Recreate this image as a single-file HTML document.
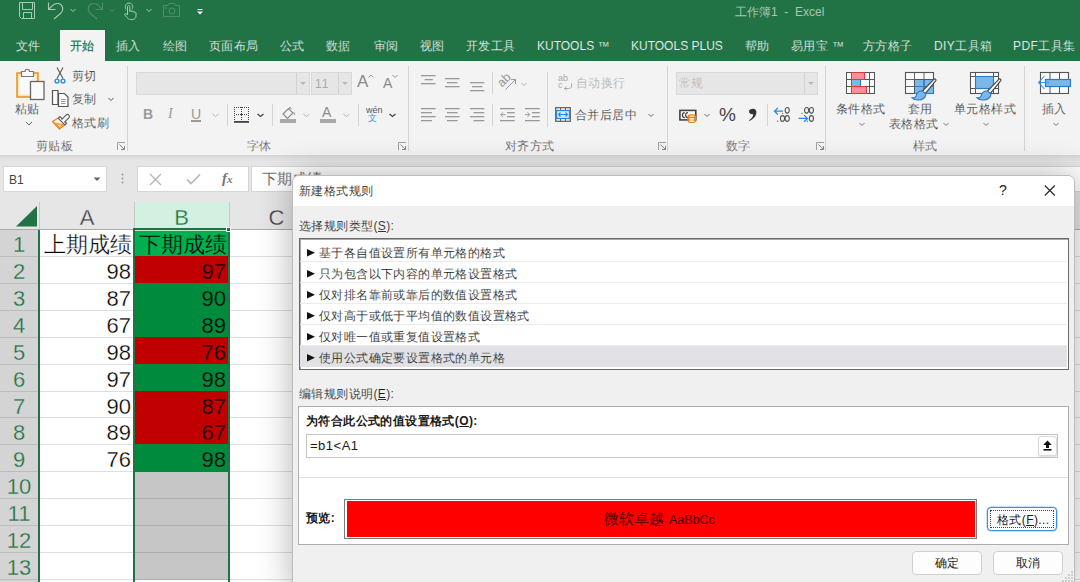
<!DOCTYPE html><html><head><meta charset="utf-8"><style>
*{margin:0;padding:0;box-sizing:border-box}
html,body{width:1080px;height:582px;overflow:hidden;background:#e6e6e6;font-family:"Liberation Sans",sans-serif;position:relative}
.a{position:absolute;white-space:nowrap}
.tab{-webkit-text-stroke:.2px #217346;letter-spacing:.4px;position:absolute;top:38px;font-size:12px;color:#fff;line-height:16px;white-space:nowrap}
.t12{-webkit-text-stroke:.2px #f3f3f3;letter-spacing:.4px;position:absolute;white-space:nowrap;font-size:12px;line-height:16px;color:#262626}
.gl{-webkit-text-stroke:.2px #f3f3f3;letter-spacing:.4px;position:absolute;white-space:nowrap;font-size:12px;line-height:16px;color:#444}
.sep{position:absolute;width:1px;background:#d4d4d4}
.dis{color:#a6a6a6}
.box{position:absolute;background:#fff;border:1px solid #d4d4d4}
svg{position:absolute;overflow:visible}
.ch{position:absolute;top:202px;height:27px;font-size:22px;line-height:31px;text-align:center;color:#444}
.rn{position:absolute;left:0;width:38px;font-size:22px;line-height:27px;text-align:center;color:#217346}
.cell{position:absolute;font-weight:300;font-size:22px;line-height:27px;color:#000;text-align:right;white-space:nowrap}
.dt{-webkit-text-stroke:.12px #f6f6f6;letter-spacing:.4px;position:absolute;white-space:nowrap;font-size:12px;line-height:16px;color:#1a1a1a}
.item{position:absolute;left:300px;width:767px;height:21px;font-size:12px;line-height:16px;color:#1a1a1a;padding-left:8px;padding-top:4px;white-space:nowrap}
.btn{position:absolute;background:#fdfdfd;border:1px solid #d0d0d0;border-radius:4px;font-size:12px;line-height:22px;text-align:center;color:#1a1a1a}
</style></head><body>
<div class="a" style="left:0;top:0;width:1080px;height:61px;background:#217346"></div>
<div class="a" style="left:735px;top:4px;font-size:12px;line-height:16px;color:#a9c6b2">工作簿1&nbsp; - &nbsp;Excel</div>
<div class="a" style="left:60px;top:30px;width:45px;height:31px;background:#f3f3f3"></div>
<div class="tab" style="left:16px;color:#fff">文件</div>
<div class="tab" style="left:70px;color:#217346">开始</div>
<div class="tab" style="left:116px;color:#fff">插入</div>
<div class="tab" style="left:163px;color:#fff">绘图</div>
<div class="tab" style="left:209px;color:#fff">页面布局</div>
<div class="tab" style="left:280px;color:#fff">公式</div>
<div class="tab" style="left:326px;color:#fff">数据</div>
<div class="tab" style="left:374px;color:#fff">审阅</div>
<div class="tab" style="left:420px;color:#fff">视图</div>
<div class="tab" style="left:466px;color:#fff">开发工具</div>
<div class="tab" style="left:537px;color:#fff;letter-spacing:0">KUTOOLS ™</div>
<div class="tab" style="left:631px;color:#fff;letter-spacing:0">KUTOOLS PLUS</div>
<div class="tab" style="left:745px;color:#fff">帮助</div>
<div class="tab" style="left:791px;color:#fff">易用宝 ™</div>
<div class="tab" style="left:863px;color:#fff">方方格子</div>
<div class="tab" style="left:934px;color:#fff">DIY工具箱</div>
<div class="tab" style="left:1013px;color:#fff">PDF工具集</div>
<div class="a" style="left:0;top:61px;width:1080px;height:94px;background:#f3f3f3"></div>
<div class="a" style="left:0;top:155px;width:1080px;height:1px;background:#d5d5d5"></div>
<div class="a" style="left:0;top:156px;width:1080px;height:5px;background:linear-gradient(#d9d9d9,#e6e6e6)"></div>
<div class="t12" style="left:15px;top:101px">粘贴</div>
<div class="t12" style="left:72px;top:68px">剪切</div>
<div class="t12" style="left:72px;top:91px">复制</div>
<div class="t12" style="left:72px;top:115px">格式刷</div>
<div class="gl" style="left:36px;top:138px">剪贴板</div>
<div class="sep" style="left:127px;top:66px;height:85px"></div>
<div class="box" style="left:136px;top:72px;width:174px;height:23px;background:#e6e6e6;border-color:#d9d9d9"></div>
<div class="box" style="left:311px;top:72px;width:41px;height:23px;background:#e6e6e6;border-color:#d9d9d9"></div>
<div class="gl" style="left:247px;top:138px">字体</div>
<div class="sep" style="left:408px;top:66px;height:85px"></div>
<div class="t12 dis" style="left:576px;top:75px">自动换行</div>
<div class="t12" style="left:575px;top:107px">合并后居中</div>
<div class="gl" style="left:505px;top:138px">对齐方式</div>
<div class="sep" style="left:667px;top:66px;height:85px"></div>
<div class="box" style="left:676px;top:72px;width:142px;height:23px;background:#e6e6e6;border-color:#d9d9d9"></div>
<div class="t12 dis" style="left:679px;top:75px">常规</div>
<div class="gl" style="left:726px;top:138px">数字</div>
<div class="sep" style="left:825px;top:66px;height:85px"></div>
<div class="t12" style="left:836px;top:101px">条件格式</div>
<div class="t12" style="left:908px;top:101px">套用</div>
<div class="t12" style="left:889px;top:116px">表格格式</div>
<div class="t12" style="left:954px;top:101px">单元格样式</div>
<div class="gl" style="left:913px;top:138px">样式</div>
<div class="sep" style="left:1024px;top:66px;height:85px"></div>
<div class="t12" style="left:1042px;top:101px">插入</div>
<div class="box" style="left:3px;top:166px;width:104px;height:26px;border-color:#d6d6d6"></div>
<div class="a" style="left:9px;top:172px;font-size:12px;line-height:16px;color:#444">B1</div>
<div class="box" style="left:137px;top:166px;width:112px;height:26px;border-color:#d6d6d6"></div>
<div class="box" style="left:251px;top:166px;width:840px;height:26px;border-color:#d6d6d6"></div>
<div class="a" style="left:262px;top:170px;font-size:15px;line-height:18px;color:#333;-webkit-text-stroke:0.25px #fff">下期成绩</div>
<div class="a" style="left:0;top:229px;width:1080px;height:353px;background:#fff"></div>
<div class="a" style="left:0;top:229px;width:1080px;height:1px;background:#ababab"></div>
<div class="a" style="left:134px;top:202px;width:95px;height:27px;background:#d3f0e0"></div>
<div class="a" style="left:39px;top:202px;width:1px;height:27px;background:#c8c8c8"></div>
<div class="a" style="left:134px;top:202px;width:1px;height:27px;background:#c8c8c8"></div>
<div class="a" style="left:229px;top:202px;width:1px;height:27px;background:#c8c8c8"></div>
<div class="a" style="left:324px;top:202px;width:1px;height:27px;background:#c8c8c8"></div>
<div class="ch" style="left:40px;width:94px;-webkit-text-stroke:0.3px #e6e6e6">A</div>
<div class="ch" style="left:134px;width:95px;color:#217346;-webkit-text-stroke:0.3px #d3f0e0">B</div>
<div class="ch" style="left:229px;width:95px;-webkit-text-stroke:0.3px #e6e6e6">C</div>
<div class="a" style="left:0;top:230px;width:38px;height:352px;background:#d4d4d4"></div>
<div class="a" style="left:38px;top:230px;width:2px;height:352px;background:#217346"></div>
<div class="a" style="left:229px;top:230px;width:1px;height:352px;background:#dedede"></div>
<div class="a" style="left:324px;top:230px;width:1px;height:352px;background:#dedede"></div>
<div class="a" style="left:0;top:256px;width:38px;height:1px;background:#bcbcbc"></div>
<div class="a" style="left:40px;top:256px;width:1040px;height:1px;background:#dedede"></div>
<div class="rn" style="top:231px;-webkit-text-stroke:0.3px #d4d4d4">1</div>
<div class="a" style="left:0;top:283px;width:38px;height:1px;background:#bcbcbc"></div>
<div class="a" style="left:40px;top:283px;width:1040px;height:1px;background:#dedede"></div>
<div class="rn" style="top:258px;-webkit-text-stroke:0.3px #d4d4d4">2</div>
<div class="a" style="left:0;top:310px;width:38px;height:1px;background:#bcbcbc"></div>
<div class="a" style="left:40px;top:310px;width:1040px;height:1px;background:#dedede"></div>
<div class="rn" style="top:285px;-webkit-text-stroke:0.3px #d4d4d4">3</div>
<div class="a" style="left:0;top:337px;width:38px;height:1px;background:#bcbcbc"></div>
<div class="a" style="left:40px;top:337px;width:1040px;height:1px;background:#dedede"></div>
<div class="rn" style="top:312px;-webkit-text-stroke:0.3px #d4d4d4">4</div>
<div class="a" style="left:0;top:364px;width:38px;height:1px;background:#bcbcbc"></div>
<div class="a" style="left:40px;top:364px;width:1040px;height:1px;background:#dedede"></div>
<div class="rn" style="top:339px;-webkit-text-stroke:0.3px #d4d4d4">5</div>
<div class="a" style="left:0;top:391px;width:38px;height:1px;background:#bcbcbc"></div>
<div class="a" style="left:40px;top:391px;width:1040px;height:1px;background:#dedede"></div>
<div class="rn" style="top:366px;-webkit-text-stroke:0.3px #d4d4d4">6</div>
<div class="a" style="left:0;top:417px;width:38px;height:1px;background:#bcbcbc"></div>
<div class="a" style="left:40px;top:417px;width:1040px;height:1px;background:#dedede"></div>
<div class="rn" style="top:393px;-webkit-text-stroke:0.3px #d4d4d4">7</div>
<div class="a" style="left:0;top:444px;width:38px;height:1px;background:#bcbcbc"></div>
<div class="a" style="left:40px;top:444px;width:1040px;height:1px;background:#dedede"></div>
<div class="rn" style="top:419px;-webkit-text-stroke:0.3px #d4d4d4">8</div>
<div class="a" style="left:0;top:471px;width:38px;height:1px;background:#bcbcbc"></div>
<div class="a" style="left:40px;top:471px;width:1040px;height:1px;background:#dedede"></div>
<div class="rn" style="top:446px;-webkit-text-stroke:0.3px #d4d4d4">9</div>
<div class="a" style="left:0;top:498px;width:38px;height:1px;background:#bcbcbc"></div>
<div class="a" style="left:40px;top:498px;width:1040px;height:1px;background:#dedede"></div>
<div class="rn" style="top:473px;-webkit-text-stroke:0.3px #d4d4d4">10</div>
<div class="a" style="left:0;top:525px;width:38px;height:1px;background:#bcbcbc"></div>
<div class="a" style="left:40px;top:525px;width:1040px;height:1px;background:#dedede"></div>
<div class="rn" style="top:500px;-webkit-text-stroke:0.3px #d4d4d4">11</div>
<div class="a" style="left:0;top:552px;width:38px;height:1px;background:#bcbcbc"></div>
<div class="a" style="left:40px;top:552px;width:1040px;height:1px;background:#dedede"></div>
<div class="rn" style="top:527px;-webkit-text-stroke:0.3px #d4d4d4">12</div>
<div class="a" style="left:0;top:579px;width:38px;height:1px;background:#bcbcbc"></div>
<div class="a" style="left:40px;top:579px;width:1040px;height:1px;background:#dedede"></div>
<div class="rn" style="top:554px;-webkit-text-stroke:0.3px #d4d4d4">13</div>
<div class="a" style="left:135px;top:231px;width:93px;height:25px;background:#00b050"></div>
<div class="a" style="left:135px;top:256px;width:93px;height:27px;background:#c00000"></div>
<div class="a" style="left:135px;top:283px;width:93px;height:27px;background:#008a3e"></div>
<div class="a" style="left:135px;top:310px;width:93px;height:27px;background:#008a3e"></div>
<div class="a" style="left:135px;top:337px;width:93px;height:27px;background:#c00000"></div>
<div class="a" style="left:135px;top:364px;width:93px;height:27px;background:#008a3e"></div>
<div class="a" style="left:135px;top:391px;width:93px;height:26px;background:#c00000"></div>
<div class="a" style="left:135px;top:417px;width:93px;height:27px;background:#c00000"></div>
<div class="a" style="left:135px;top:444px;width:93px;height:28px;background:#008a3e"></div>
<div class="a" style="left:135px;top:472px;width:93px;height:27px;background:#c6c6c6"></div>
<div class="a" style="left:135px;top:498px;width:93px;height:1px;background:#acacac"></div>
<div class="a" style="left:135px;top:499px;width:93px;height:27px;background:#c6c6c6"></div>
<div class="a" style="left:135px;top:525px;width:93px;height:1px;background:#acacac"></div>
<div class="a" style="left:135px;top:526px;width:93px;height:27px;background:#c6c6c6"></div>
<div class="a" style="left:135px;top:552px;width:93px;height:1px;background:#acacac"></div>
<div class="a" style="left:135px;top:553px;width:93px;height:27px;background:#c6c6c6"></div>
<div class="a" style="left:135px;top:579px;width:93px;height:1px;background:#acacac"></div>
<div class="cell" style="left:40px;width:92px;top:231px;-webkit-text-stroke:0.3px #fff">上期成绩</div>
<div class="cell" style="left:135px;width:92px;top:231px;-webkit-text-stroke:0.3px #00b050">下期成绩</div>
<div class="cell" style="left:40px;width:91px;top:258px;-webkit-text-stroke:0.3px #fff">98</div>
<div class="cell" style="left:135px;width:91px;top:258px;-webkit-text-stroke:0.3px #c00000">97</div>
<div class="cell" style="left:40px;width:91px;top:285px;-webkit-text-stroke:0.3px #fff">87</div>
<div class="cell" style="left:135px;width:91px;top:285px;-webkit-text-stroke:0.3px #008a3e">90</div>
<div class="cell" style="left:40px;width:91px;top:312px;-webkit-text-stroke:0.3px #fff">67</div>
<div class="cell" style="left:135px;width:91px;top:312px;-webkit-text-stroke:0.3px #008a3e">89</div>
<div class="cell" style="left:40px;width:91px;top:339px;-webkit-text-stroke:0.3px #fff">98</div>
<div class="cell" style="left:135px;width:91px;top:339px;-webkit-text-stroke:0.3px #c00000">76</div>
<div class="cell" style="left:40px;width:91px;top:366px;-webkit-text-stroke:0.3px #fff">97</div>
<div class="cell" style="left:135px;width:91px;top:366px;-webkit-text-stroke:0.3px #008a3e">98</div>
<div class="cell" style="left:40px;width:91px;top:393px;-webkit-text-stroke:0.3px #fff">90</div>
<div class="cell" style="left:135px;width:91px;top:393px;-webkit-text-stroke:0.3px #c00000">87</div>
<div class="cell" style="left:40px;width:91px;top:419px;-webkit-text-stroke:0.3px #fff">89</div>
<div class="cell" style="left:135px;width:91px;top:419px;-webkit-text-stroke:0.3px #c00000">67</div>
<div class="cell" style="left:40px;width:91px;top:446px;-webkit-text-stroke:0.3px #fff">76</div>
<div class="cell" style="left:135px;width:91px;top:446px;-webkit-text-stroke:0.3px #008a3e">98</div>
<div class="a" style="left:135px;top:230px;width:93px;height:1px;background:#bfe8cc"></div>
<div class="a" style="left:133px;top:228px;width:97px;height:360px;border:2px solid #217346"></div>
<div class="a" style="left:226px;top:227px;width:5px;height:5px;background:#217346;border:1px solid #fff"></div>
<svg style="left:18px;top:2px" width="18" height="18" viewBox="0 0 18 18"><g fill="none" stroke="#a9cbb5" stroke-width="1"><path d="M1.5 0.5H16.5V16.5H3.5L1.5 14.5Z"/><path d="M4.5 0.5V7.5H14.5V0.5"/><path d="M5.5 16.5V10.5H13.5V16.5"/></g></svg>
<svg style="left:46px;top:1px" width="20" height="20" viewBox="0 0 20 20"><g fill="none" stroke="#a9cbb5" stroke-width="1.1"><path d="M2.5 1.5V8.5H9.5"/><path d="M2.5 8.5L7 4.2C10 1.5 15.5 1.8 16.6 6.5C17.2 9 16 11 14.5 12.5L8 18"/></g></svg>
<svg style="left:70px;top:8px" width="7" height="5" viewBox="0 0 7 5"><path d="M0.5 1L3 3.5L5.5 1" fill="none" stroke="#a9cbb5" stroke-width="1"/></svg>
<svg style="left:86px;top:1px" width="20" height="20" viewBox="0 0 20 20"><g fill="none" stroke="#4f8d67" stroke-width="1.1"><path d="M16.5 1.5V8.5H9.5"/><path d="M16.5 8.5L12 4.2C9 1.5 3.5 1.8 2.4 6.5C1.8 9 3 11 4.5 12.5L11 18"/></g></svg>
<svg style="left:109px;top:8px" width="7" height="5" viewBox="0 0 7 5"><path d="M0.5 1L3 3.5L5.5 1" fill="none" stroke="#4f8d67" stroke-width="1"/></svg>
<svg style="left:123px;top:2px" width="15" height="18" viewBox="0 0 15 18"><g fill="none" stroke="#a9cbb5" stroke-width="1"><path d="M3 7.5C1.5 5 2.5 1 6 1C9.5 1 10.5 5 9 7.5"/><path d="M4.5 13V4.5C4.5 3.2 6.8 3.2 6.8 4.5V9.5C6.8 8.5 9 8.5 9 9.5V10C9 9 11 9 11 10.5C11 9.8 13 9.8 13 11V14C13 16 11.5 17.5 9.5 17.5H7.5C6 17.5 5 16.5 4 15.5L1.8 13C1.2 12 2.5 11 3.5 11.8L4.5 13"/></g></svg>
<svg style="left:146px;top:8px" width="7" height="5" viewBox="0 0 7 5"><path d="M0.5 1L3 3.5L5.5 1" fill="none" stroke="#a9cbb5" stroke-width="1"/></svg>
<svg style="left:163px;top:3px" width="18" height="15" viewBox="0 0 18 15"><g fill="none" stroke="#4f8d67" stroke-width="1"><path d="M0.5 2.5H5L6 0.5H11.5L12.5 2.5H16.5V13.5H0.5Z"/><circle cx="9" cy="8" r="3"/><circle cx="3" cy="5" r="0.6"/></g></svg>
<svg style="left:197px;top:9px" width="7" height="6" viewBox="0 0 7 6"><path d="M0.5 0.5H5.5" stroke="#fff" stroke-width="1"/><path d="M0 2.5H6L3 5.5Z" fill="#fff"/></svg>
<svg style="left:15px;top:67px" width="31" height="34" viewBox="0 0 31 34"><rect x="2" y="6" width="21" height="24" fill="#fbe7ad" stroke="#e9952f" stroke-width="1.6"/><rect x="4.5" y="8.5" width="16" height="19" fill="#f9f9f9"/><path d="M6.5 4.5H10C10 1.5 14.5 1.5 14.5 4.5H18.5V9.5H6.5Z" fill="#f9f9f9" stroke="#777" stroke-width="1.2"/><rect x="15.5" y="14.5" width="13.5" height="18" fill="#fafafa" stroke="#666" stroke-width="1.3"/></svg>
<svg style="left:25px;top:121px" width="8" height="6" viewBox="0 0 8 6"><path d="M1 1L4 4L7 1" fill="none" stroke="#666" stroke-width="1"/></svg>
<svg style="left:53px;top:66px" width="14" height="18" viewBox="0 0 14 18"><g fill="none" stroke-width="1.1"><path d="M4 1.5L10 12.5M10 1.5L4 12.5" stroke="#555"/><circle cx="4" cy="15" r="1.9" stroke="#2e8ad6" stroke-width="1.4"/><circle cx="10" cy="15" r="1.9" stroke="#2e8ad6" stroke-width="1.4"/></g></svg>
<svg style="left:51px;top:89px" width="20" height="19" viewBox="0 0 20 19"><g fill="#fafafa" stroke="#555" stroke-width="1.2"><path d="M1.5 1.5H7V15.5H1.5Z"/><path d="M7.5 4.5H13.5L17 8V17.5H7.5Z"/></g><path d="M10 10.5H14.5M10 12.5H14.5M10 14.5H14.5" stroke="#888" stroke-width="0.9"/></svg>
<svg style="left:108px;top:97px" width="7" height="5" viewBox="0 0 7 5"><path d="M0.5 1L3 3.5L5.5 1" fill="none" stroke="#555" stroke-width="1"/></svg>
<svg style="left:48px;top:108px" width="24" height="24" viewBox="0 0 24 24"><path d="M11 9.5L4.5 13.5L11.5 21L17.5 16Z" fill="#fdf6ea" stroke="#e8801f" stroke-width="1.2" stroke-linejoin="round"/><path d="M5.5 14.2L11.5 20.3L16.5 16.2Z" fill="#f29a2e"/><path d="M9 16.5L11.8 19L13.8 16.8Z" fill="#fcd27a"/><path d="M10.3 10.3L12 8.6L18.6 15.2L16.9 16.9Z" fill="#fafafa" stroke="#555" stroke-width="1.1" stroke-linejoin="round"/><path d="M13.6 11.6L18.3 6.9C19 6.2 20 6.2 20.6 6.9L21 7.3C21.6 8 21.6 8.9 21 9.6L16.3 14.3" fill="#fafafa" stroke="#555" stroke-width="1.1" stroke-linejoin="round"/></svg>
<svg style="left:117px;top:142px" width="9" height="9" viewBox="0 0 9 9"><path d="M0.5 8V0.5H8" fill="none" stroke="#a0a0a0" stroke-width="1"/><path d="M2.5 2.5L7.5 7.5M7.5 4V7.5H4" fill="none" stroke="#888" stroke-width="1"/></svg>
<svg style="left:398px;top:142px" width="9" height="9" viewBox="0 0 9 9"><path d="M0.5 8V0.5H8" fill="none" stroke="#a0a0a0" stroke-width="1"/><path d="M2.5 2.5L7.5 7.5M7.5 4V7.5H4" fill="none" stroke="#888" stroke-width="1"/></svg>
<svg style="left:658px;top:142px" width="9" height="9" viewBox="0 0 9 9"><path d="M0.5 8V0.5H8" fill="none" stroke="#a0a0a0" stroke-width="1"/><path d="M2.5 2.5L7.5 7.5M7.5 4V7.5H4" fill="none" stroke="#888" stroke-width="1"/></svg>
<svg style="left:816px;top:142px" width="9" height="9" viewBox="0 0 9 9"><path d="M0.5 8V0.5H8" fill="none" stroke="#a0a0a0" stroke-width="1"/><path d="M2.5 2.5L7.5 7.5M7.5 4V7.5H4" fill="none" stroke="#888" stroke-width="1"/></svg>
<div class="a" style="left:296px;top:73px;width:1px;height:21px;background:#d2d2d2"></div>
<div class="a" style="left:338px;top:73px;width:1px;height:21px;background:#d2d2d2"></div>
<div class="a" style="left:804px;top:73px;width:1px;height:21px;background:#d2d2d2"></div>
<svg style="left:299px;top:81px" width="8" height="5" viewBox="0 0 8 5"><path d="M1 1H7L4 4Z" fill="#b9b9b9"/></svg>
<svg style="left:341px;top:81px" width="8" height="5" viewBox="0 0 8 5"><path d="M1 1H7L4 4Z" fill="#b9b9b9"/></svg>
<div class="a" style="left:315px;top:76px;font-size:12px;line-height:16px;color:#aaa;letter-spacing:1px">11</div>
<div class="a" style="left:357px;top:72px;font-size:17px;line-height:20px;color:#8a8a8a">A</div>
<svg style="left:368px;top:74px" width="7" height="5" viewBox="0 0 7 5"><path d="M0.5 3.5L3 1L5.5 3.5" fill="none" stroke="#8a8a8a" stroke-width="0.9"/></svg>
<div class="a" style="left:383px;top:75px;font-size:14px;line-height:16px;color:#8a8a8a">A</div>
<svg style="left:392px;top:74px" width="7" height="5" viewBox="0 0 7 5"><path d="M0.5 1L3 3.5L5.5 1" fill="none" stroke="#8a8a8a" stroke-width="0.9"/></svg>
<div class="a" style="left:143px;top:106px;font-size:14px;line-height:16px;color:#9a9a9a;font-weight:bold">B</div>
<div class="a" style="left:168px;top:106px;font-size:14px;line-height:16px;color:#9a9a9a;font-style:italic;font-family:'Liberation Serif',serif">I</div>
<div class="a" style="left:191px;top:106px;font-size:14px;line-height:16px;color:#9a9a9a">U</div>
<div class="a" style="left:191px;top:120px;width:10px;height:1.5px;background:#9a9a9a"></div>
<svg style="left:212px;top:113px" width="8" height="5" viewBox="0 0 8 5"><path d="M0.5 1L3.5 3.5L6.5 1" fill="none" stroke="#b5b5b5" stroke-width="1"/></svg>
<div class="sep" style="left:227px;top:104px;height:22px"></div>
<svg style="left:233px;top:106px" width="17" height="17" viewBox="0 0 17 17"><g fill="#444"><rect x="1" y="1" width="1" height="1"/><rect x="8" y="1" width="1" height="1"/><rect x="15" y="1" width="1" height="1"/><rect x="1" y="3" width="1" height="1"/><rect x="8" y="3" width="1" height="1"/><rect x="15" y="3" width="1" height="1"/><rect x="1" y="5" width="1" height="1"/><rect x="8" y="5" width="1" height="1"/><rect x="15" y="5" width="1" height="1"/><rect x="1" y="7" width="1" height="1"/><rect x="8" y="7" width="1" height="1"/><rect x="15" y="7" width="1" height="1"/><rect x="1" y="9" width="1" height="1"/><rect x="8" y="9" width="1" height="1"/><rect x="15" y="9" width="1" height="1"/><rect x="1" y="11" width="1" height="1"/><rect x="8" y="11" width="1" height="1"/><rect x="15" y="11" width="1" height="1"/><rect x="1" y="13" width="1" height="1"/><rect x="8" y="13" width="1" height="1"/><rect x="15" y="13" width="1" height="1"/><rect x="3" y="1" width="1" height="1"/><rect x="3" y="8" width="1" height="1"/><rect x="5" y="1" width="1" height="1"/><rect x="5" y="8" width="1" height="1"/><rect x="7" y="1" width="1" height="1"/><rect x="7" y="8" width="1" height="1"/><rect x="9" y="1" width="1" height="1"/><rect x="9" y="8" width="1" height="1"/><rect x="11" y="1" width="1" height="1"/><rect x="11" y="8" width="1" height="1"/><rect x="13" y="1" width="1" height="1"/><rect x="13" y="8" width="1" height="1"/><rect x="8" y="8" width="1" height="1"/></g><rect x="1" y="15" width="15" height="1.8" fill="#444"/></svg>
<svg style="left:257px;top:113px" width="8" height="5" viewBox="0 0 8 5"><path d="M0.5 1L3.5 3.5L6.5 1" fill="none" stroke="#444" stroke-width="1.3"/></svg>
<div class="sep" style="left:272px;top:104px;height:22px"></div>
<svg style="left:280px;top:106px" width="17" height="17" viewBox="0 0 17 17"><path d="M3 8L8.5 2.5L13 7L7.5 12.5Z" fill="none" stroke="#888" stroke-width="1.1"/><path d="M9 4C8.5 1 11 0.5 11 3" fill="none" stroke="#888" stroke-width="1"/><path d="M13 7C14 6 15 8 14.5 9" fill="none" stroke="#aaa" stroke-width="1.3"/><rect x="0" y="13" width="16" height="4" fill="#a9a9a9"/></svg>
<svg style="left:303px;top:113px" width="8" height="5" viewBox="0 0 8 5"><path d="M0.5 1L3.5 3.5L6.5 1" fill="none" stroke="#b5b5b5" stroke-width="1"/></svg>
<div class="a" style="left:322px;top:104px;font-size:14px;line-height:16px;color:#8a8a8a">A</div>
<div class="a" style="left:320px;top:119px;width:16px;height:4px;background:#a9a9a9"></div>
<svg style="left:343px;top:113px" width="8" height="5" viewBox="0 0 8 5"><path d="M0.5 1L3.5 3.5L6.5 1" fill="none" stroke="#b5b5b5" stroke-width="1"/></svg>
<div class="sep" style="left:358px;top:104px;height:22px"></div>
<div class="a" style="left:366px;top:105px;font-size:9px;line-height:11px;color:#555">wén</div>
<div class="a" style="left:368px;top:113px;font-size:9px;line-height:11px;color:#3a96dd">文</div>
<svg style="left:389px;top:113px" width="8" height="5" viewBox="0 0 8 5"><path d="M0.5 1L3.5 3.5L6.5 1" fill="none" stroke="#444" stroke-width="1.3"/></svg>
<svg style="left:421px;top:75px" width="16" height="16" viewBox="0 0 16 16"><g fill="#9a9a9a"><rect x="0" y="0" width="14.6" height="1.3"/><rect x="3.5" y="4" width="8.5" height="1.3"/><rect x="0" y="8" width="14.6" height="1.3"/></g></svg>
<svg style="left:445px;top:78px" width="16" height="16" viewBox="0 0 16 16"><g fill="#9a9a9a"><rect x="0" y="0" width="14.6" height="1.3"/><rect x="2" y="4" width="10.6" height="1.3"/><rect x="0" y="8" width="14.6" height="1.3"/></g></svg>
<svg style="left:470px;top:82px" width="16" height="16" viewBox="0 0 16 16"><g fill="#9a9a9a"><rect x="0" y="0" width="14.3" height="1.3"/><rect x="2" y="4" width="10.3" height="1.3"/><rect x="0" y="8" width="14.3" height="1.3"/></g></svg>
<svg style="left:421px;top:107.5px" width="16" height="16" viewBox="0 0 16 16"><g fill="#9a9a9a"><rect x="0" y="0" width="14.6" height="1.3"/><rect x="0" y="4" width="11" height="1.3"/><rect x="0" y="8" width="14.6" height="1.3"/><rect x="0" y="12" width="11" height="1.3"/></g></svg>
<svg style="left:445px;top:107.5px" width="16" height="16" viewBox="0 0 16 16"><g fill="#9a9a9a"><rect x="0" y="0" width="14.6" height="1.3"/><rect x="2" y="4" width="10.6" height="1.3"/><rect x="0" y="8" width="14.6" height="1.3"/><rect x="2" y="12" width="10.6" height="1.3"/></g></svg>
<svg style="left:470px;top:107.5px" width="16" height="16" viewBox="0 0 16 16"><g fill="#9a9a9a"><rect x="0" y="0" width="14.3" height="1.3"/><rect x="3.5" y="4" width="10.8" height="1.3"/><rect x="0" y="8" width="14.3" height="1.3"/><rect x="3.5" y="12" width="10.8" height="1.3"/></g></svg>
<div class="sep" style="left:492px;top:72px;height:22px"></div>
<div class="sep" style="left:492px;top:104px;height:22px"></div>
<div class="a" style="left:497px;top:73px;font-size:12.5px;line-height:14px;color:#999;transform:rotate(-45deg);transform-origin:7px 7px">ab</div>
<svg style="left:505px;top:78px" width="12" height="12" viewBox="0 0 12 12"><path d="M0.5 11.5L10.5 1.5M6 1.5H10.5V6" fill="none" stroke="#9a9a9a" stroke-width="1"/></svg>
<svg style="left:521px;top:82px" width="7" height="5" viewBox="0 0 7 5"><path d="M0.5 1L3 3.5L5.5 1" fill="none" stroke="#b5b5b5" stroke-width="1"/></svg>
<svg style="left:500px;top:107.5px" width="16" height="16" viewBox="0 0 16 16"><g fill="#9a9a9a"><rect x="0" y="0" width="14.8" height="1.3"/><rect x="7" y="4" width="7.8" height="1.3"/><rect x="7" y="8" width="7.8" height="1.3"/><rect x="0" y="12" width="14.8" height="1.3"/></g><path d="M5.5 6.6H0.8M3 4.3L0.8 6.6L3 8.9" fill="none" stroke="#9a9a9a" stroke-width="1"/></svg>
<svg style="left:524.5px;top:107.5px" width="16" height="16" viewBox="0 0 16 16"><g fill="#9a9a9a"><rect x="0" y="0" width="14.8" height="1.3"/><rect x="7" y="4" width="7.8" height="1.3"/><rect x="7" y="8" width="7.8" height="1.3"/><rect x="0" y="12" width="14.8" height="1.3"/></g><path d="M0 6.6H4.7M2.5 4.3L4.7 6.6L2.5 8.9" fill="none" stroke="#9a9a9a" stroke-width="1"/></svg>
<div class="sep" style="left:547px;top:72px;height:55px"></div>
<div class="a" style="left:558px;top:74px;font-size:9px;line-height:9px;color:#aaa">ab</div>
<div class="a" style="left:558px;top:81px;font-size:9px;line-height:9px;color:#aaa">c</div>
<svg style="left:563px;top:83px" width="10" height="8" viewBox="0 0 10 8"><path d="M8.5 0.5V3C8.5 5 7 5.5 5.5 5.5H1.5M3.5 3.5L1.5 5.5L3.5 7.5" fill="none" stroke="#aaa" stroke-width="1"/></svg>
<svg style="left:555px;top:107px" width="16" height="15" viewBox="0 0 16 15"><rect x="0.7" y="0.7" width="14.6" height="13.6" fill="#fafafa" stroke="#666" stroke-width="1.3"/><rect x="1.5" y="3.5" width="13" height="8" fill="#d4e8f9" stroke="#2b88d8" stroke-width="1.3"/><path d="M3.5 7.5H12.5M5.5 5.5L3.5 7.5L5.5 9.5M10.5 5.5L12.5 7.5L10.5 9.5" fill="none" stroke="#2b88d8" stroke-width="1.1"/><path d="M5.5 0.7V3M10.5 0.7V3M5.5 12V14.3M10.5 12V14.3" stroke="#666" stroke-width="1"/></svg>
<svg style="left:648px;top:113px" width="7" height="5" viewBox="0 0 7 5"><path d="M0.5 1L3 3.5L5.5 1" fill="none" stroke="#666" stroke-width="1"/></svg>
<svg style="left:807px;top:81px" width="8" height="5" viewBox="0 0 8 5"><path d="M1 1H7L4 4Z" fill="#b9b9b9"/></svg>
<svg style="left:678px;top:108px" width="20" height="16" viewBox="0 0 20 16"><rect x="1.9" y="2.4" width="15.9" height="9.5" fill="#fafafa" stroke="#444" stroke-width="1.6"/><path d="M6.8 4.6C5 4.6 4.4 5.9 4.4 7.1C4.4 8.4 5 9.7 6.8 9.7M10 4.6C8.2 4.6 7.6 5.9 7.6 7.1C7.6 8.4 8.2 9.7 10 9.7" fill="none" stroke="#444" stroke-width="1.2"/><rect x="9.4" y="6.2" width="8.8" height="8.8" rx="3" fill="#e8801f"/><ellipse cx="13.8" cy="8.2" rx="2.8" ry="0.9" fill="#ffd68a"/><ellipse cx="13.8" cy="10.8" rx="2.8" ry="0.9" fill="#fff3e6"/><ellipse cx="13.8" cy="13.2" rx="2.8" ry="0.9" fill="#fff3e6"/></svg>
<svg style="left:704px;top:113px" width="7" height="5" viewBox="0 0 7 5"><path d="M0.5 1L3 3.5L5.5 1" fill="none" stroke="#666" stroke-width="1"/></svg>
<div class="a" style="left:719px;top:104px;font-size:19px;line-height:22px;color:#444">%</div>
<svg style="left:748px;top:108px" width="10" height="14" viewBox="0 0 10 14"><path d="M5 0.8C7.5 0.8 8.8 2.8 8.3 5.5C7.8 8.5 5 11.5 1.5 13L1 12.2C3.5 10.8 5 9 5.3 6.2C3 6.5 1 5.5 1 3.5C1 1.8 2.8 0.8 5 0.8Z" fill="#333"/></svg>
<div class="sep" style="left:767px;top:104px;height:22px"></div>
<svg style="left:773px;top:106px" width="18" height="18" viewBox="0 0 18 18"><path d="M10 5.2H1.8M4.9 1.9L1.5 5.2L4.9 8.5" fill="none" stroke="#2b88d8" stroke-width="1.3"/><circle cx="9.6" cy="7.3" r="0.65" fill="#555"/><ellipse cx="14.2" cy="4.3" rx="2.05" ry="2.85" fill="none" stroke="#555" stroke-width="1.1"/><circle cx="4.6" cy="15.2" r="0.65" fill="#555"/><ellipse cx="9.5" cy="12.5" rx="2.05" ry="2.85" fill="none" stroke="#555" stroke-width="1.1"/><ellipse cx="14.2" cy="12.5" rx="2.05" ry="2.85" fill="none" stroke="#555" stroke-width="1.1"/></svg>
<svg style="left:797px;top:106px" width="18" height="18" viewBox="0 0 18 18"><circle cx="5" cy="7.3" r="0.65" fill="#555"/><ellipse cx="9.6" cy="4.3" rx="2.05" ry="2.85" fill="none" stroke="#555" stroke-width="1.1"/><ellipse cx="14.4" cy="4.3" rx="2.05" ry="2.85" fill="none" stroke="#555" stroke-width="1.1"/><path d="M1.5 12.4H10.2M7.1 9.1L10.5 12.4L7.1 15.7" fill="none" stroke="#2b88d8" stroke-width="1.3"/><circle cx="10.3" cy="15.2" r="0.65" fill="#555"/><ellipse cx="14.4" cy="12.5" rx="2.05" ry="2.85" fill="none" stroke="#555" stroke-width="1.1"/></svg>
<svg style="left:846px;top:72px" width="29" height="22" viewBox="0 0 29 22"><rect x="0.5" y="0.5" width="28" height="21" fill="#fafafa" stroke="#555" stroke-width="1"/><path d="M0.5 7.5H28.5M0.5 14.5H28.5M5.5 0.5V21.5M23.5 0.5V21.5" stroke="#555" stroke-width="1"/><rect x="5.5" y="0.5" width="13" height="7" fill="#ff8f97" stroke="#e0363d" stroke-width="1"/><rect x="5.5" y="7.5" width="9" height="7" fill="#7ab8ea" stroke="#2a7bc4" stroke-width="1"/><rect x="5.5" y="14.5" width="15" height="7" fill="#ff8f97" stroke="#e0363d" stroke-width="1"/></svg>
<svg style="left:859px;top:122px" width="7" height="5" viewBox="0 0 7 5"><path d="M0.5 1L3 3.5L5.5 1" fill="none" stroke="#777" stroke-width="1"/></svg>
<svg style="left:902px;top:72px" width="36" height="30" viewBox="0 0 36 30"><rect x="3.5" y="0.5" width="28" height="21" fill="#fafafa" stroke="#555" stroke-width="1.1"/><rect x="12.5" y="7.5" width="19" height="14" fill="#7ab8ea" stroke="#2a7bc4" stroke-width="1"/><path d="M3.5 7.5H31.5M3.5 14.5H31.5M12.5 0.5V21.5M22 0.5V21.5" stroke="#555" stroke-width="1" opacity="0.9"/><path d="M12.5 14.5H31.5M22 7.5V21.5" stroke="#2a7bc4" stroke-width="1"/><path d="M20 19.5L32 7.2C32.8 6.4 34.6 7.5 33.8 8.6L23 21.8" fill="#fafafa" stroke="#444" stroke-width="1.1"/><path d="M20.2 19C17 18.5 14.5 21 14.2 23.5C14 25 12.5 26 10 25.8C12.5 28.6 19 28.9 22 26C24.2 24 24.2 21.8 23 21Z" fill="#7ab8ea" stroke="#2a7bc4" stroke-width="1.1"/></svg>
<svg style="left:943px;top:122px" width="7" height="5" viewBox="0 0 7 5"><path d="M0.5 1L3 3.5L5.5 1" fill="none" stroke="#777" stroke-width="1"/></svg>
<svg style="left:967px;top:72px" width="36" height="30" viewBox="0 0 36 30"><rect x="3.5" y="0.5" width="28" height="21" fill="#fafafa" stroke="#555" stroke-width="1.1"/><path d="M3.5 4.5H31.5M3.5 16.5H31.5M8.5 0.5V21.5M26.5 0.5V21.5" stroke="#555" stroke-width="1"/><rect x="8.5" y="4.5" width="18" height="12" fill="#7ab8ea" stroke="#2a7bc4" stroke-width="1.1"/><path d="M20 19.5L32 7.2C32.8 6.4 34.6 7.5 33.8 8.6L23 21.8" fill="#fafafa" stroke="#444" stroke-width="1.1"/><path d="M20.2 19C17 18.5 14.5 21 14.2 23.5C14 25 12.5 26 10 25.8C12.5 28.6 19 28.9 22 26C24.2 24 24.2 21.8 23 21Z" fill="#7ab8ea" stroke="#2a7bc4" stroke-width="1.1"/></svg>
<svg style="left:983px;top:122px" width="7" height="5" viewBox="0 0 7 5"><path d="M0.5 1L3 3.5L5.5 1" fill="none" stroke="#777" stroke-width="1"/></svg>
<svg style="left:1037px;top:72px" width="36" height="23" viewBox="0 0 36 23"><rect x="3.5" y="0.5" width="28" height="21" fill="#fafafa" stroke="#555" stroke-width="1.1"/><path d="M13 0.5V21.5M22.5 0.5V21.5" stroke="#555" stroke-width="1"/><rect x="8.5" y="7.5" width="25" height="7" fill="#7ab8ea" stroke="#2a7bc4" stroke-width="1.2"/><path d="M1.5 10.5H12M7.5 4L1.5 10.5L7.5 17" fill="none" stroke="#3a96dd" stroke-width="1.1"/></svg>
<svg style="left:1053px;top:122px" width="7" height="5" viewBox="0 0 7 5"><path d="M0.5 1L3 3.5L5.5 1" fill="none" stroke="#777" stroke-width="1"/></svg>
<svg style="left:93px;top:177px" width="9" height="5" viewBox="0 0 9 5"><path d="M0.5 0.5H7.5L4 4Z" fill="#666"/></svg>
<svg style="left:121px;top:173px" width="3" height="13" viewBox="0 0 3 13"><g fill="#9a9a9a"><circle cx="1.5" cy="1.5" r="1"/><circle cx="1.5" cy="5.5" r="1"/><circle cx="1.5" cy="9.5" r="1"/></g></svg>
<svg style="left:149px;top:173px" width="13" height="13" viewBox="0 0 13 13"><path d="M1 1L12 12M12 1L1 12" stroke="#b5b5b5" stroke-width="1.3"/></svg>
<svg style="left:186px;top:173px" width="15" height="12" viewBox="0 0 15 12"><path d="M1 6.5L5 10.5L14 1.5" fill="none" stroke="#b5b5b5" stroke-width="1.6"/></svg>
<div class="a" style="left:222px;top:169px;font-size:15px;line-height:18px;color:#777;font-style:italic;font-family:'Liberation Serif',serif;font-weight:bold">f<span style="font-size:11px">x</span></div>
<svg style="left:16px;top:206px" width="22" height="21" viewBox="0 0 22 21"><path d="M21 0V20.5H0Z" fill="#217346"/></svg>
<div class="a" style="left:292px;top:175px;width:783px;height:420px;background:#f0f0f0;border:1px solid #bdbdbd;border-radius:7px;box-shadow:0 0 34px rgba(0,0,0,.3);overflow:hidden"><div style="height:30px;background:#fff"></div></div>
<div class="dt" style="left:299px;top:183px">新建格式规则</div>
<div class="a" style="left:999px;top:182px;font-size:14px;line-height:16px;color:#222">?</div>
<svg style="left:1044px;top:185px" width="12" height="11" viewBox="0 0 12 11"><path d="M0.8 0.5L10.8 10.5M10.8 0.5L0.8 10.5" stroke="#222" stroke-width="1.1"/></svg>
<div class="dt" style="left:299px;top:218px">选择规则类型(<u>S</u>):</div>
<div class="a" style="left:299px;top:238px;width:770px;height:132px;background:#fff;border:1px solid #6a6a6a;box-shadow:inset 1px 1px 0 #a8a8a8"></div>
<div class="item" style="top:240px;background:transparent"></div>
<svg style="left:307px;top:249px" width="8" height="8" viewBox="0 0 8 8"><path d="M0 0L8 3.75L0 7.5Z" fill="#111"/></svg>
<div class="dt" style="left:319px;top:245px">基于各自值设置所有单元格的格式</div>
<div class="a" style="left:300px;top:261px;width:767px;height:1px;background:#ececec"></div>
<div class="item" style="top:261px;background:transparent"></div>
<svg style="left:307px;top:270px" width="8" height="8" viewBox="0 0 8 8"><path d="M0 0L8 3.75L0 7.5Z" fill="#111"/></svg>
<div class="dt" style="left:319px;top:266px">只为包含以下内容的单元格设置格式</div>
<div class="a" style="left:300px;top:282px;width:767px;height:1px;background:#ececec"></div>
<div class="item" style="top:282px;background:transparent"></div>
<svg style="left:307px;top:291px" width="8" height="8" viewBox="0 0 8 8"><path d="M0 0L8 3.75L0 7.5Z" fill="#111"/></svg>
<div class="dt" style="left:319px;top:287px">仅对排名靠前或靠后的数值设置格式</div>
<div class="a" style="left:300px;top:303px;width:767px;height:1px;background:#ececec"></div>
<div class="item" style="top:303px;background:transparent"></div>
<svg style="left:307px;top:312px" width="8" height="8" viewBox="0 0 8 8"><path d="M0 0L8 3.75L0 7.5Z" fill="#111"/></svg>
<div class="dt" style="left:319px;top:308px">仅对高于或低于平均值的数值设置格式</div>
<div class="a" style="left:300px;top:324px;width:767px;height:1px;background:#ececec"></div>
<div class="item" style="top:324px;background:transparent"></div>
<svg style="left:307px;top:333px" width="8" height="8" viewBox="0 0 8 8"><path d="M0 0L8 3.75L0 7.5Z" fill="#111"/></svg>
<div class="dt" style="left:319px;top:329px">仅对唯一值或重复值设置格式</div>
<div class="a" style="left:300px;top:345px;width:767px;height:1px;background:#ececec"></div>
<div class="item" style="top:346px;background:#e1e1e6"></div>
<svg style="left:307px;top:354px" width="8" height="8" viewBox="0 0 8 8"><path d="M0 0L8 3.75L0 7.5Z" fill="#111"/></svg>
<div class="dt" style="left:319px;top:350px">使用公式确定要设置格式的单元格</div>
<div class="dt" style="left:299px;top:386px">编辑规则说明(<u>E</u>):</div>
<div class="a" style="left:298px;top:406px;width:771px;height:139px;background:#fff;border:1px solid #adadad"></div>
<div class="dt" style="left:306px;top:413px;font-weight:bold;-webkit-text-stroke:0">为符合此公式的值设置格式(<u>O</u>):</div>
<div class="a" style="left:306px;top:434px;width:752px;height:24px;background:#fff;border:1px solid #c4c4c4"></div>
<div class="a" style="left:310px;top:438px;font-size:13px;line-height:16px;color:#1a1a1a;letter-spacing:.5px">=b1&lt;A1</div>
<div class="a" style="left:1038px;top:436px;width:19px;height:20px;background:#fff;border:1px solid #dadada;border-radius:3px;box-shadow:0 1px 1px rgba(0,0,0,.12)"></div>
<svg style="left:1043px;top:440px" width="10" height="11" viewBox="0 0 10 11"><path d="M4.5 0.5L8.8 5H6V8H3V5H0.2Z" fill="#111"/><rect x="0.5" y="9" width="8" height="1.6" fill="#111"/></svg>
<div class="a" style="left:299px;top:477px;width:769px;height:1px;background:#e0e0e0"></div>
<div class="dt" style="left:306px;top:510px;font-weight:bold;-webkit-text-stroke:0">预览:</div>
<div class="a" style="left:344px;top:499px;width:633px;height:40px;background:#fff;border:1px solid #7a7a7a"></div>
<div class="a" style="left:347px;top:501px;width:628px;height:36px;background:#ff0000"></div>
<div class="a" style="left:604px;top:510px;font-size:15px;line-height:18px;color:#4a0000">微软卓越<span style="font-size:12.5px;margin-left:5px">AaBbCc</span></div>
<div class="btn" style="left:987px;top:507px;width:70px;height:24px;border-color:#3a8de0;box-shadow:0 0 0 0.5px #9cc6ef"><div style="position:absolute;left:2px;top:2px;right:2px;bottom:2px;border:1px dotted #444"></div></div>
<div class="dt" style="left:997px;top:512px;-webkit-text-stroke:0">格式(<u>F</u>)...</div>
<div class="btn" style="left:912px;top:551px;width:70px;height:24px">确定</div>
<div class="btn" style="left:993px;top:551px;width:70px;height:24px">取消</div>
<svg style="left:1062px;top:570px" width="12" height="12" viewBox="0 0 12 12"><g fill="#cfcfcf"><rect x="9" y="1" width="2" height="2"/><rect x="6" y="4" width="2" height="2"/><rect x="9" y="4" width="2" height="2"/><rect x="3" y="7" width="2" height="2"/><rect x="6" y="7" width="2" height="2"/><rect x="9" y="7" width="2" height="2"/><rect x="0" y="10" width="2" height="2"/><rect x="3" y="10" width="2" height="2"/><rect x="6" y="10" width="2" height="2"/><rect x="9" y="10" width="2" height="2"/></g></svg>
<div class="a" style="left:378px;top:231px;width:8px;height:1px;background:#333"></div>
<div class="a" style="left:378px;top:399px;width:8px;height:1px;background:#333"></div>
</body></html>
